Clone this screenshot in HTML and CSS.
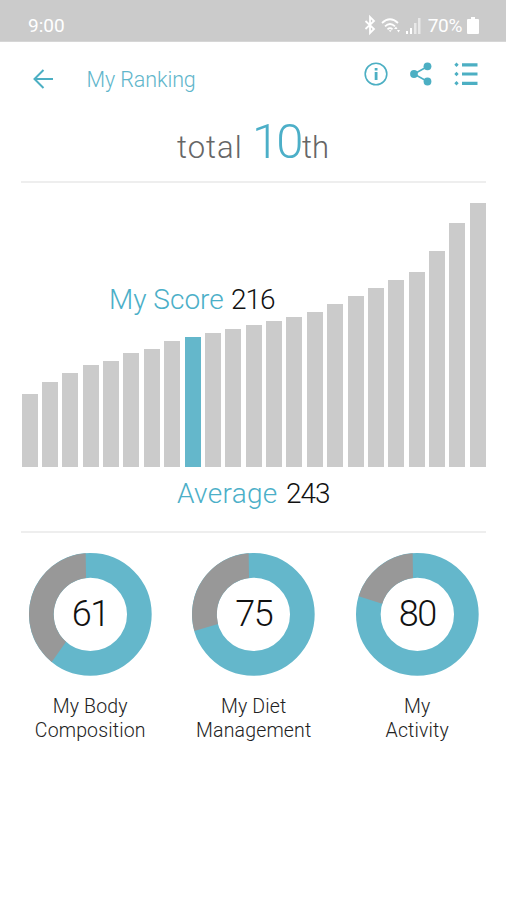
FILE: index.html
```html
<!DOCTYPE html>
<html lang="en">
<head>
<meta charset="utf-8">
<title>My Ranking</title>
<link rel="stylesheet" href="styles.css">
</head>
<body>

<div class="statusbar">
  <span class="clock">9:00</span>
  <div class="status-icons">
    <svg class="bt" width="12" height="18" viewBox="0 0 12 18"><path d="M1.5 5 10 13 6 17V1l4 4-8.500 8"/></svg>
    <svg class="wifi" width="20" height="17" viewBox="0 0 20 17"><path d="M1 6q8-7.500 16 0M4 9.300q5-4.600 10 0M6.500 12.300q2.500-2.300 5 0"/><path class="solid" d="M7.700 13.300h3L9.200 15zM13 12l2-2.500 1.500 2.500zM16 13h3l-1.500 2.500z"/></svg>
    <svg class="signal" width="15" height="17" viewBox="0 0 15 17"><path class="solid" d="M0 14h2v3H0zM4 11h2v6H4z"/><path class="dim" d="M8 6h2.500v11H8zM12 1h2.500v16H12z"/></svg>
    <span class="percent">70%</span>
    <svg class="battery" width="12" height="17" viewBox="0 0 12 17"><path class="solid" d="M4 0h4v2h3q1 0 1 1v13q0 1-1 1H1q-1 0-1-1V3q0-1 1-1h3z"/></svg>
  </div>
</div>

<div class="header">
  <svg class="back" width="20" height="20" viewBox="0 0 20 20"><path d="M10.500 1 1.500 10l9 9M1.500 10H20"/></svg>
  <h1>My Ranking</h1>
  <div class="actions">
    <svg width="24" height="24" viewBox="0 0 24 24"><circle cx="12" cy="12" r="10.800"/><path class="fill" d="M10.700 6h2.800v2.600h-2.800zM10.700 10h2.800v8h-2.800z"/></svg>
    <svg width="24" height="24" viewBox="0 0 24 24"><path d="M18.500 4.500 5 12l13.500 7.500"/><circle class="fill" cx="18.500" cy="4.300" r="3.900"/><circle class="fill" cx="5" cy="12" r="3.900"/><circle class="fill" cx="18.500" cy="19.500" r="3.900"/></svg>
    <svg width="24" height="24" viewBox="0 0 24 24"><path class="fill" d="M.300 2.800 2.500.600l2.200 2.200L2.500 5zM.300 12l2.200-2.200L4.700 12l-2.200 2.200zM.300 21.300l2.200-2.200 2.200 2.200-2.200 2.200zM8 1.300h15.500v3.200H8zM8 10.400h15.500v3.200H8zM8 19.700h15.500v3.200H8z"/></svg>
  </div>
</div>

<div class="total"><span class="word">total</span><span class="rank">10</span><span class="suffix">th</span></div>

<div class="chart">
  <div class="my-score"><span class="name">My Score</span><span class="num">216</span></div>
  <div class="bars">
    <i style="height:73px"></i>
    <i style="height:85.300px"></i>
    <i style="height:94px"></i>
    <i style="height:102px"></i>
    <i style="height:106px"></i>
    <i style="height:114px"></i>
    <i style="height:118px"></i>
    <i style="height:126px"></i>
    <i class="mine" style="height:130.300px"></i>
    <i style="height:134.300px"></i>
    <i style="height:138.300px"></i>
    <i style="height:142.500px"></i>
    <i style="height:146.500px"></i>
    <i style="height:150.500px"></i>
    <i style="height:154.700px"></i>
    <i style="height:162.700px"></i>
    <i style="height:171px"></i>
    <i style="height:179px"></i>
    <i style="height:187px"></i>
    <i style="height:195.500px"></i>
    <i style="height:215.700px"></i>
    <i style="height:244.300px"></i>
    <i style="height:264.300px"></i>
  </div>
</div>

<div class="average"><span class="name">Average</span><span class="num">243</span></div>

<div class="scores">
  <div class="score">
    <div class="donut">
      <svg viewBox="0 0 368 368"><circle class="ring" cx="184" cy="184" r="147"/><path class="rest" d="M170 0.500A184 184 0 0 0 68.200 327L111 266.400A110 110 0 0 1 171 74.800z"/></svg>
      <b>61</b>
    </div>
    <p>My Body<br>Composition</p>
  </div>
  <div class="score">
    <div class="donut">
      <svg viewBox="0 0 368 368"><circle class="ring" cx="184" cy="184" r="147"/><path class="rest" d="M170 0.500A184 184 0 0 0 7 234L78 213A110 110 0 0 1 171 74.800z"/></svg>
      <b>75</b>
    </div>
    <p>My Diet<br>Management</p>
  </div>
  <div class="score">
    <div class="donut">
      <svg viewBox="0 0 368 368"><circle class="ring" cx="184" cy="184" r="147"/><path class="rest" d="M170 0.500A184 184 0 0 0 8 130L78.600 152.500A110 110 0 0 1 171 74.800z"/></svg>
      <b>80</b>
    </div>
    <p>My<br>Activity</p>
  </div>
</div>

</body>
</html>
```
FILE: styles.css
```css
* { box-sizing: border-box; }
body { margin: 0; background: #fff; color: #222; font-family: Roboto, "Liberation Sans", sans-serif; font-weight: 300; }
svg { display: block; fill: none; overflow: visible; }

.statusbar { display: flex; justify-content: space-between; height: 42px; padding: 15px 27px 0 28px; background: #cbcbcb; color: #fff;
border-bottom: 1px solid #d6d6d6; font-size: 19px; line-height: 21px; font-weight: 400; }
.status-icons { display: flex; align-items: center; height: 20px; }
.status-icons svg { stroke: #fff; stroke-width: 1.8; }
.status-icons .solid { fill: #fff; stroke: none; }
.status-icons .dim { fill: #e8e8e8; stroke: none; }
.wifi { margin: 0 5px; }
.percent { margin: 0 5px 0 7px; letter-spacing: -0.3px; }

.header { display: flex; align-items: center; height: 74px; padding: 0 28px 0 33px; color: #5fb6cb; }
.header svg { stroke: #4cafc3; stroke-width: 1.6; }
.header .fill { fill: #4cafc3; stroke: none; }
.header .back { stroke-width: 2; }
h1 { margin: 1px 0 0 33.500px; font-size: 21.500px; font-weight: 300; letter-spacing: -0.1px; }
.actions { display: flex; gap: 21px; margin: -10px 0 0 auto; }

.total { display: flex; align-items: baseline; height: 67px; margin: 0 20px 0 21px; padding-left: 156px; border-bottom: 2px solid #eee;
color: #666; font-size: 31px; line-height: 52px; }
.word { width: 75px; letter-spacing: 1px; }
.rank { width: 50px; color: #4cafc8; font-size: 49px; letter-spacing: -3px; }

.chart { position: relative; height: 284px; padding: 0 20px 0 21.500px; }
.bars { display: flex; align-items: flex-end; justify-content: space-between; height: 284px; }
.bars i { width: 16px; background: #cbcbcb; }
.bars .mine { background: #64b7cb; }
/* sits over the empty upper left of the chart */
.my-score { position: absolute; left: 109px; top: 100px; }
.my-score, .average { display: flex; font-size: 28px; line-height: 34px; }
.name { color: #4cafc8; }
.my-score .name { width: 122px; }
.average { height: 66px; margin: 0 20px 0 21px; padding: 10px 0 0 156px; border-bottom: 2px solid #eee; }
.average .name { width: 109px; letter-spacing: 0.3px; }
.num { color: #111; letter-spacing: -1px; }

.scores { display: flex; justify-content: space-between; padding: 19.500px 7px 0 8.500px; }
.score { width: 163.500px; text-align: center; }
.donut { display: grid; width: 122.700px; height: 122.700px; margin: 0 auto; place-items: center; }
.donut svg, .donut b { grid-area: 1 / 1; }
.donut svg { width: 100%; }
.donut b { padding-top: 1px; color: #111; font-size: 36px; line-height: 40px; font-weight: 300; letter-spacing: -1.500px; }
.ring { stroke: #64b7cb; stroke-width: 74; }
.rest { fill: #989898; }
p { margin: 19.500px 0 0; font-size: 19.500px; line-height: 24.500px; letter-spacing: 0.15px; }
```
